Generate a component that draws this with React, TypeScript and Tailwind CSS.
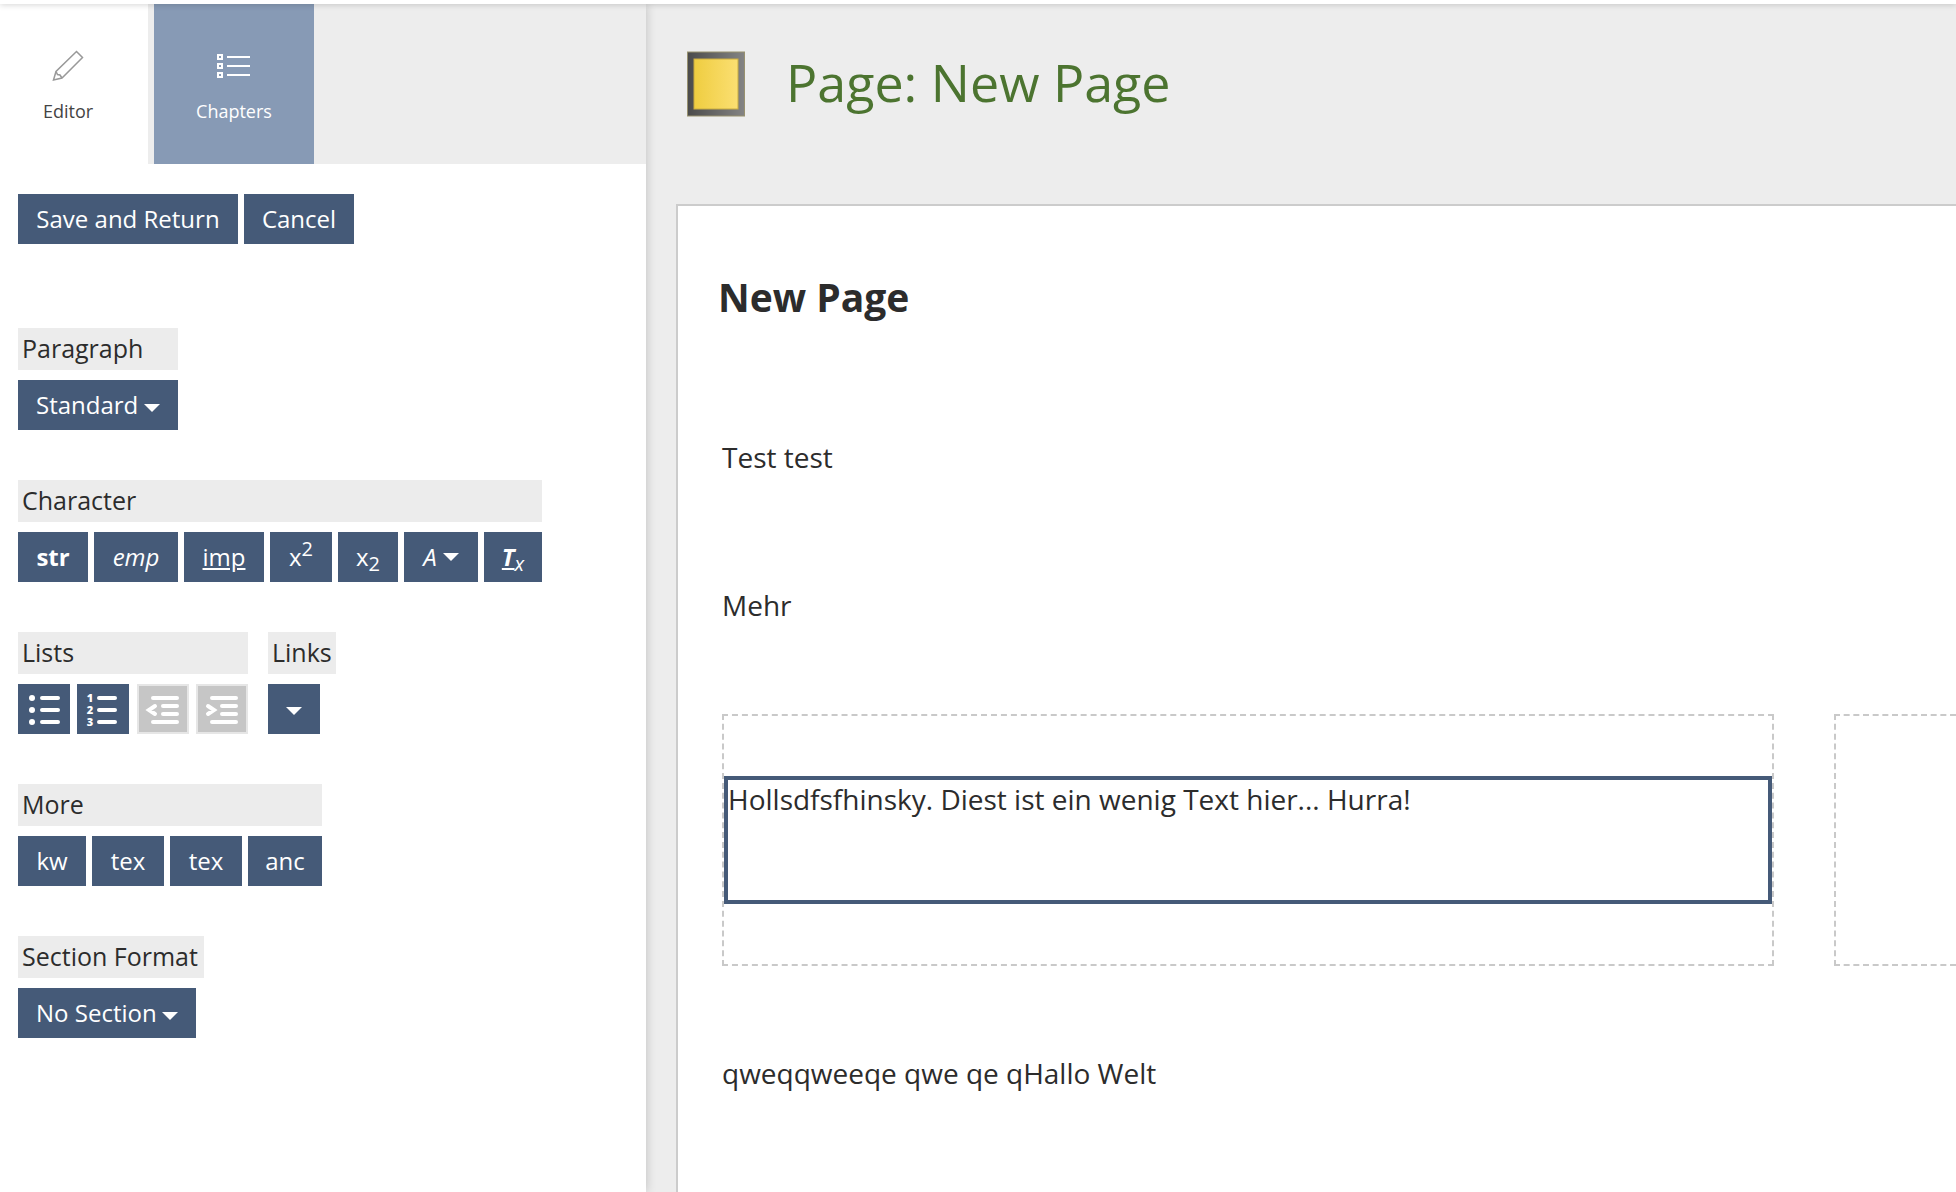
import { useState, type ReactNode } from "react";
import clsx from "clsx";

const dark = "bg-[#455a78] text-white h-[50px] text-[24px] leading-[34px]";

function Caret() {
    return (
        <svg width="16" height="8" viewBox="0 0 16 8" className="shrink-0" aria-hidden="true">
            <path d="M0 0h16L8 8z" fill="currentColor" />
        </svg>
    );
}

function PencilIcon() {
    return (
        <svg width="32" height="32" viewBox="0 0 32 32" fill="none" stroke="#999999" strokeWidth="1.5" aria-hidden="true">
            <path d="M24.500 1.500 30.500 7.500 10 28 1.500 30 4 21.500z" />
            <path d="M4 21.500 5.500 24.500 8 25 10 28" />
        </svg>
    );
}

function ChaptersIcon() {
    return (
        <svg width="34" height="32" viewBox="0 0 34 32" fill="none" stroke="#ffffff" strokeWidth="2" aria-hidden="true">
            <path d="M1 5h4v4H1zM1 14h4v4H1zM1 23h4v4H1z" />
            <path d="M10 7h23M10 16h23M10 25h23" />
        </svg>
    );
}

function ListIcon({ kind }: { kind: "bullet" | "number" | "outdent" | "indent" }) {
    return (
        <svg width="52" height="50" viewBox="0 0 52 50" fill="none" stroke="#ffffff" strokeWidth="4" strokeLinecap="round" aria-hidden="true">
            {kind === "bullet" && (
                <>
                    <path d="M24 14h16M24 26h16M24 38h16" />
                    <g fill="#ffffff" stroke="none">
                        <circle cx="14" cy="14" r="3" />
                        <circle cx="14" cy="26" r="3" />
                        <circle cx="14" cy="38" r="3" />
                    </g>
                </>
            )}
            {kind === "number" && (
                <>
                    <path d="M22 14h16M22 26h16M22 38h16" />
                    <g fill="#ffffff" stroke="none" fontSize="11" fontWeight="800" textAnchor="middle">
                        <text x="13" y="18">1</text>
                        <text x="13" y="30">2</text>
                        <text x="13" y="42">3</text>
                    </g>
                </>
            )}
            {kind === "outdent" && <path d="M16 14h24M26 22h14M26 30h14M16 38h24M18 22l-6 4 6 4" />}
            {kind === "indent" && <path d="M16 14h24M26 22h14M26 30h14M16 38h24M12 22l6 4-6 4" />}
        </svg>
    );
}

function Tool({ className, children, label, menu }: { className?: string; children: ReactNode; label?: string; menu?: boolean }) {
    return (
        <button
            type="button"
            aria-label={label}
            aria-haspopup={menu ? "menu" : undefined}
            className={clsx(dark, "flex items-center justify-center gap-[6px] hover:bg-[#384a63]", className)}
        >
            {children}
        </button>
    );
}

const groupLabel = "h-[42px] bg-[#ececec] px-1 text-[25px] leading-10 whitespace-nowrap";

function Group({ title, row = "gap-[6px]", children }: { title: string; row?: string; children: ReactNode }) {
    return (
        <section className="flex flex-col gap-[10px]">
            <h2 className={groupLabel}>{title}</h2>
            <div className={clsx("flex", row)}>{children}</div>
        </section>
    );
}

function Picker({ id, title, options, className, selectClass }: { id: string; title: string; options: string[]; className: string; selectClass: string }) {
    const [value, setValue] = useState(options[0]);
    return (
        <section className={clsx("flex flex-col gap-[10px]", className)}>
            <label htmlFor={id} className={groupLabel}>{title}</label>
            <div className={clsx("relative", selectClass)}>
                <select
                    id={id}
                    value={value}
                    onChange={e => setValue(e.target.value)}
                    className={clsx(dark, "w-full appearance-none pl-[18px]")}
                >
                    {options.map(o => <option key={o}>{o}</option>)}
                </select>
                <span className="pointer-events-none absolute top-6 right-[18px] text-white"><Caret /></span>
            </div>
        </section>
    );
}

function Sidebar() {
    return (
        <aside className="relative w-[646px] shrink-0 bg-white shadow-[0_0_10px_rgba(0,0,0,0.2)]">
            <nav className="flex h-40 gap-[6px] bg-[#ededed] text-[18px] leading-6">
                <a href="#editor" className="flex w-[148px] flex-col items-center gap-[17px] bg-white pt-[46px] pr-3 text-[#444444]">
                    <PencilIcon />
                    Editor
                </a>
                <a href="#chapters" className="flex w-40 flex-col items-center gap-[17px] bg-[#879ab5] pt-[46px] text-white">
                    <ChaptersIcon />
                    Chapters
                </a>
            </nav>
            <div className="flex flex-col items-start px-[18px] pt-[30px]">
                <div className="mb-[84px] flex gap-[6px]">
                    <Tool className="w-[220px]">Save and Return</Tool>
                    <Tool className="w-[110px]">Cancel</Tool>
                </div>
                <div className="flex flex-col items-start gap-[50px]">
                    <Picker id="paragraph" title="Paragraph" options={["Standard", "Headline", "Citation"]} className="w-40" selectClass="w-full" />
                    <Group title="Character">
                        <Tool className="w-[70px] font-bold">str</Tool>
                        <Tool className="w-[84px] italic">emp</Tool>
                        <Tool className="w-20 underline">imp</Tool>
                        <Tool className="w-[62px]"><span>x<sup className="text-[20px]">2</sup></span></Tool>
                        <Tool className="w-[60px]"><span>x<sub className="text-[20px]">2</sub></span></Tool>
                        <Tool className="w-[74px] italic" menu><span>A</span><Caret /></Tool>
                        <Tool className="w-[58px] italic"><span><b className="underline">T</b><sub className="text-[20px]">x</sub></span></Tool>
                    </Group>
                    <div className="flex gap-5">
                        <Group title="Lists" row="w-[230px] justify-between">
                            <Tool label="Bulleted list"><ListIcon kind="bullet" /></Tool>
                            <Tool label="Numbered list"><ListIcon kind="number" /></Tool>
                            <button type="button" disabled aria-label="Outdent" className="bg-[#c6c6c6] inset-ring-2 inset-ring-[#e6e6e6]"><ListIcon kind="outdent" /></button>
                            <button type="button" disabled aria-label="Indent" className="bg-[#c6c6c6] inset-ring-2 inset-ring-[#e6e6e6]"><ListIcon kind="indent" /></button>
                        </Group>
                        <Group title="Links">
                            <Tool className="w-[52px] pt-1" label="Links" menu><Caret /></Tool>
                        </Group>
                    </div>
                    <Group title="More">
                        <Tool className="w-[68px]">kw</Tool>
                        <Tool className="w-[72px]">tex</Tool>
                        <Tool className="w-[72px]">tex</Tool>
                        <Tool className="w-[74px]">anc</Tool>
                    </Group>
                    <Picker id="section" title="Section Format" options={["No Section", "Block", "Card"]} className="w-[186px]" selectClass="w-[178px]" />
                </div>
            </div>
        </aside>
    );
}

function PageIcon() {
    return (
        <svg width="58" height="66" viewBox="0 0 58 66" aria-hidden="true">
            <defs>
                <linearGradient id="frame" x1="0" x2="1">
                    <stop offset="0" stopColor="#4b4b4b" />
                    <stop offset="1" stopColor="#848484" />
                </linearGradient>
                <linearGradient id="sheet" x1="0" x2="1">
                    <stop offset="0" stopColor="#efcd40" />
                    <stop offset="1" stopColor="#fbdf72" />
                </linearGradient>
            </defs>
            <rect x="0.5" y="1" width="57" height="64" fill="url(#frame)" stroke="#98916f" />
            <rect x="7" y="8" width="44" height="50" fill="url(#sheet)" stroke="#c9ac40" />
        </svg>
    );
}

export default function App() {
    const [text, setText] = useState("Hollsdfsfhinsky. Diest ist ein wenig Text hier... Hurra!");

    return (
        <div className="flex min-h-screen flex-col overflow-hidden bg-[#ededed] font-['Open_Sans',sans-serif] text-[#2c2c2c]">
            <div className="relative z-10 h-1 bg-white shadow-[0_0_6px_rgba(0,0,0,0.25)]" />
            <div className="flex flex-1">
                <Sidebar />
                <main className="flex min-w-0 flex-1 flex-col pl-[30px]">
                    <header className="flex items-start gap-[41px] pt-[47px] pb-[87px] pl-[11px]">
                        <PageIcon />
                        <h1 className="text-[52px] leading-[62px] text-[#4c7430]">Page: New Page</h1>
                    </header>
                    <article className="flex-1 border-t-2 border-l-2 border-[#cccccc] bg-white pt-[65px] pl-10 text-[28px] leading-10">
                        <h2 className="mb-[114px] text-[39px] leading-[52px] font-bold">New Page</h2>
                        <div className="pl-1">
                            <p className="mb-[108px]">Test test</p>
                            <p className="mb-[89px]">Mehr</p>
                            <div className="mb-[87px] flex gap-[60px]">
                                <div className="min-w-0 flex-1 border-2 border-dashed border-[#c9c9c9] py-[60px]">
                                    <textarea
                                        aria-label="Paragraph text"
                                        value={text}
                                        onChange={e => setText(e.target.value)}
                                        className="block h-32 w-full resize-none border-4 border-[#455a78] leading-[38px] outline-none"
                                    />
                                </div>
                                <div className="w-[122px] border-2 border-r-0 border-dashed border-[#c9c9c9]" />
                            </div>
                            <p>qweqqweeqe qwe qe qHallo Welt</p>
                        </div>
                    </article>
                </main>
            </div>
        </div>
    );
}
